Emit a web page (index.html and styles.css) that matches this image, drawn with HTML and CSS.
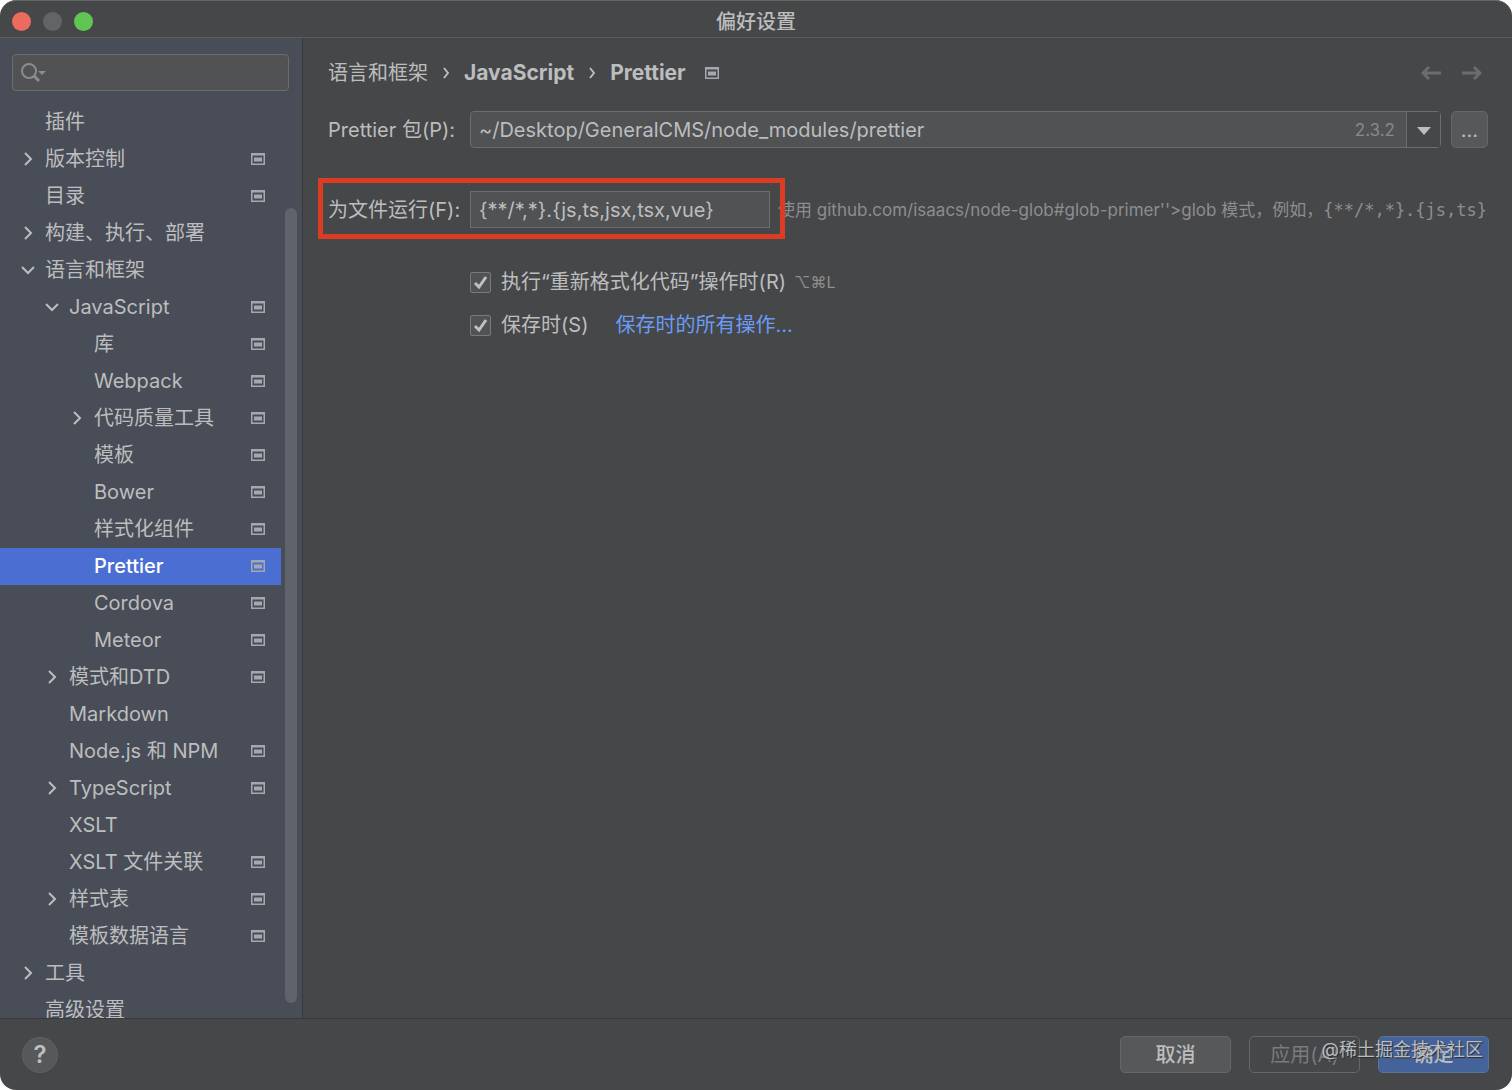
FILE: index.html
```
<!DOCTYPE html>
<html lang="zh-CN">

<head>
    <meta charset="UTF-8">
    <meta name="viewport" content="width=device-width, initial-scale=1">
    <title>偏好设置</title>
    <link rel="stylesheet" href="styles.css">
</head>

<body>

    <!-- Shared icons -->
    <svg class="icon-defs" aria-hidden="true">
        <symbol id="icon-right" viewBox="0 0 16 16">
            <path d="M5 2l6 6-6 6" fill="none" stroke="currentColor" stroke-width="2" />
        </symbol>
        <symbol id="icon-down" viewBox="0 0 16 16">
            <path d="M2 5l6 6 6-6" fill="none" stroke="currentColor" stroke-width="2" />
        </symbol>
        <symbol id="icon-project" viewBox="0 0 14 12">
            <path d="M0 0h14v12H0zM1.5 2.5v8h11v-8z" fill="currentColor" fill-rule="evenodd" />
            <path d="M3 4.500h8v4H3z" fill="currentColor" />
        </symbol>
    </svg>

    <div class="window">
        <header class="title-bar">
            <div class="traffic-lights">
                <button class="light close" aria-label="关闭"></button>
                <button class="light minimize" aria-label="最小化"></button>
                <button class="light zoom" aria-label="缩放"></button>
            </div>
            <h1>偏好设置</h1>
        </header>

        <div class="content">
            <!-- Left side: settings tree -->
            <aside class="sidebar">
                <label class="search">
                    <svg class="search-icon" viewBox="0 0 26 20" aria-hidden="true">
                        <circle cx="8" cy="8" r="7" fill="none" stroke="currentColor" stroke-width="2" />
                        <path d="M13 13l5 5" stroke="currentColor" stroke-width="3" />
                        <path d="M17 8h8l-4 4z" fill="currentColor" />
                    </svg>
                    <input type="text" aria-label="搜索">
                </label>

                <div class="tree-area">
                    <nav class="tree">
                        <a href="#" class="row"><i class="arrow"></i><span>插件</span></a>
                        <a href="#" class="row"><svg class="arrow"><use href="#icon-right" /></svg><span>版本控制</span><svg class="project"><use href="#icon-project" /></svg></a>
                        <a href="#" class="row"><i class="arrow"></i><span>目录</span><svg class="project"><use href="#icon-project" /></svg></a>
                        <a href="#" class="row"><svg class="arrow"><use href="#icon-right" /></svg><span>构建、执行、部署</span></a>
                        <a href="#" class="row"><svg class="arrow"><use href="#icon-down" /></svg><span>语言和框架</span></a>
                        <a href="#" class="row level-1"><svg class="arrow"><use href="#icon-down" /></svg><span>JavaScript</span><svg class="project"><use href="#icon-project" /></svg></a>
                        <a href="#" class="row level-2"><i class="arrow"></i><span>库</span><svg class="project"><use href="#icon-project" /></svg></a>
                        <a href="#" class="row level-2"><i class="arrow"></i><span>Webpack</span><svg class="project"><use href="#icon-project" /></svg></a>
                        <a href="#" class="row level-2"><svg class="arrow"><use href="#icon-right" /></svg><span>代码质量工具</span><svg class="project"><use href="#icon-project" /></svg></a>
                        <a href="#" class="row level-2"><i class="arrow"></i><span>模板</span><svg class="project"><use href="#icon-project" /></svg></a>
                        <a href="#" class="row level-2"><i class="arrow"></i><span>Bower</span><svg class="project"><use href="#icon-project" /></svg></a>
                        <a href="#" class="row level-2"><i class="arrow"></i><span>样式化组件</span><svg class="project"><use href="#icon-project" /></svg></a>
                        <a href="#" class="row level-2 selected"><i class="arrow"></i><span>Prettier</span><svg class="project"><use href="#icon-project" /></svg></a>
                        <a href="#" class="row level-2"><i class="arrow"></i><span>Cordova</span><svg class="project"><use href="#icon-project" /></svg></a>
                        <a href="#" class="row level-2"><i class="arrow"></i><span>Meteor</span><svg class="project"><use href="#icon-project" /></svg></a>
                        <a href="#" class="row level-1"><svg class="arrow"><use href="#icon-right" /></svg><span>模式和DTD</span><svg class="project"><use href="#icon-project" /></svg></a>
                        <a href="#" class="row level-1"><i class="arrow"></i><span>Markdown</span></a>
                        <a href="#" class="row level-1"><i class="arrow"></i><span>Node.js 和 NPM</span><svg class="project"><use href="#icon-project" /></svg></a>
                        <a href="#" class="row level-1"><svg class="arrow"><use href="#icon-right" /></svg><span>TypeScript</span><svg class="project"><use href="#icon-project" /></svg></a>
                        <a href="#" class="row level-1"><i class="arrow"></i><span>XSLT</span></a>
                        <a href="#" class="row level-1"><i class="arrow"></i><span>XSLT 文件关联</span><svg class="project"><use href="#icon-project" /></svg></a>
                        <a href="#" class="row level-1"><svg class="arrow"><use href="#icon-right" /></svg><span>样式表</span><svg class="project"><use href="#icon-project" /></svg></a>
                        <a href="#" class="row level-1"><i class="arrow"></i><span>模板数据语言</span><svg class="project"><use href="#icon-project" /></svg></a>
                        <a href="#" class="row"><svg class="arrow"><use href="#icon-right" /></svg><span>工具</span></a>
                        <a href="#" class="row"><i class="arrow"></i><span>高级设置</span></a>
                    </nav>
                    <div class="scroll-thumb"></div>
                </div>
            </aside>

            <!-- Right side: Prettier settings -->
            <main class="settings">
                <div class="top-line">
                    <div class="breadcrumb">
                        <span>语言和框架</span>
                        <svg class="separator" viewBox="0 0 6 12"><path d="M1 1l4 5-4 5" fill="none" stroke="currentColor" stroke-width="2" /></svg>
                        <b>JavaScript</b>
                        <svg class="separator" viewBox="0 0 6 12"><path d="M1 1l4 5-4 5" fill="none" stroke="currentColor" stroke-width="2" /></svg>
                        <b>Prettier</b>
                        <svg class="project"><use href="#icon-project" /></svg>
                    </div>
                    <div class="history">
                        <button aria-label="后退" disabled>
                            <svg viewBox="0 0 20 16"><path d="M20 8H2M8 2L2 8l6 6" fill="none" stroke="currentColor" stroke-width="3" /></svg>
                        </button>
                        <button aria-label="前进" disabled>
                            <svg viewBox="0 0 20 16"><path d="M0 8h18M12 2l6 6-6 6" fill="none" stroke="currentColor" stroke-width="3" /></svg>
                        </button>
                    </div>
                </div>

                <div class="form-row">
                    <label for="package">Prettier 包(P):</label>
                    <div class="combo">
                        <input type="text" id="package" value="~/Desktop/GeneralCMS/node_modules/prettier">
                        <span class="version">2.3.2</span>
                        <button class="combo-button" aria-label="选择包">
                            <svg viewBox="0 0 14 8"><path d="M0 0h14L7 8z" fill="currentColor" /></svg>
                        </button>
                    </div>
                    <button class="browse">...</button>
                </div>

                <div class="form-row run-row">
                    <div class="highlight">
                        <label for="files">为文件运行(F):</label>
                        <input type="text" id="files" class="text-field" value="{**/*,*}.{js,ts,jsx,tsx,vue}">
                    </div>
                    <p class="hint">使用 github.com/isaacs/node-glob#glob-primer''&gt;glob 模式，例如，<code>{**/*,*}.{js,ts}</code></p>
                </div>

                <div class="options">
                    <div class="option">
                        <input type="checkbox" id="on-reformat" checked>
                        <label for="on-reformat">执行“重新格式化代码”操作时(R)</label>
                        <kbd>⌥⌘L</kbd>
                    </div>
                    <div class="option">
                        <input type="checkbox" id="on-save" checked>
                        <label for="on-save">保存时(S)</label>
                        <a href="#" class="save-link">保存时的所有操作...</a>
                    </div>
                </div>
            </main>
        </div>

        <footer class="footer">
            <button class="help" aria-label="帮助">?</button>
            <div class="actions">
                <button class="action">取消</button>
                <button class="action" disabled>应用(A)</button>
                <button class="action primary">确定</button>
            </div>
            <span class="watermark">@稀土掘金技术社区</span>
        </footer>
    </div>

</body>

</html>
```
FILE: styles.css
```
/* Preferences window */
* {
    box-sizing: border-box;
}

body {
    margin: 0;
    background-color: #fff;
    color: #bcbdbf;
    font-family: Inter, "Noto Sans CJK SC", sans-serif;
    font-size: 20px;
    line-height: 24px;
}

button,
input {
    font: inherit;
    color: inherit;
}

button {
    padding: 0;
}

.icon-defs {
    display: none;
}

.window {
    display: flex;
    flex-direction: column;
    height: 100vh;
    border-top: 1px solid #636466;
    border-radius: 16px;
    background-color: #464749;
    overflow: hidden;
}

/* Title bar */
.title-bar {
    display: grid;
    grid-template-columns: 1fr auto 1fr;
    align-items: center;
    height: 37px;
    border-bottom: 1px solid #5b5c5e;
    flex-shrink: 0;
}

.traffic-lights {
    display: flex;
    gap: 12px;
    padding: 4px 0 0 12px;
}

.light {
    width: 19px;
    height: 19px;
    border: none;
    border-radius: 50%;
}

.close {
    background-color: #ec6a5e;
}

.minimize {
    background-color: #636466;
}

.zoom {
    background-color: #61c554;
}

h1 {
    margin: 5px 0 0;
    font-size: 20px;
    font-weight: 500;
}

.content {
    display: flex;
    flex: 1;
    min-height: 0;
}

/* Left side */
.sidebar {
    display: flex;
    flex-direction: column;
    flex: 0 0 303px;
    min-width: 0;
    border-right: 1px solid #38393c;
    background-color: #494d57;
}

.search {
    display: flex;
    align-items: center;
    height: 37px;
    margin: 16px 13px 13px 12px;
    padding: 0 8px;
    border: 1px solid #6b6d6f;
    border-radius: 4px;
    background-color: #505254;
    color: #8a8c8e;
}

.search-icon {
    width: 26px;
    height: 20px;
    flex-shrink: 0;
}

.search input {
    flex: 1;
    min-width: 0;
    border: none;
    outline: none;
    background: none;
}

.tree-area {
    display: flex;
    flex: 1;
    min-height: 0;
}

.tree {
    flex: 1;
    overflow: hidden;
}

.row {
    display: flex;
    align-items: center;
    gap: 9px;
    height: 37px;
    padding: 0 16px 2px 20px;
    color: inherit;
    text-decoration: none;
}

.row span {
    flex: 1;
    white-space: nowrap;
}

.level-1 {
    padding-left: 44px;
}

.level-2 {
    padding-left: 69px;
}

.selected {
    background-color: #4b6ed2;
}

.selected span {
    color: #fff;
    font-weight: 500;
}

.arrow {
    width: 16px;
    height: 16px;
}

.project {
    width: 14px;
    height: 12px;
    color: #a4a9af;
}

.scroll-thumb {
    width: 12px;
    margin: 104px 5px 15px 4px;
    border-radius: 6px;
    background-color: #5f636a;
}

/* Right side */
.settings {
    flex: 1;
    min-width: 0;
    padding: 23px 24px 0 25px;
}

.top-line,
.breadcrumb,
.history {
    display: flex;
    align-items: center;
}

.top-line {
    justify-content: space-between;
    margin-bottom: 26px;
}

.breadcrumb {
    gap: 15px;
}

.breadcrumb b {
    font-size: 21px;
}

.breadcrumb .project {
    margin-left: 4px;
}

.separator {
    width: 6px;
    height: 12px;
}

.history {
    gap: 21px;
    padding-right: 6px;
}

.history button {
    display: flex;
    border: none;
    background: none;
    color: #6b6c6e;
}

.history svg {
    width: 20px;
    height: 16px;
}

.form-row {
    display: flex;
    align-items: center;
}

.form-row label {
    flex: 0 0 142px;
}

.combo {
    display: flex;
    align-items: center;
    flex: 1;
    height: 37px;
    border: 1px solid #6b6d6f;
    border-radius: 4px;
    background-color: #505254;
}

.combo input {
    flex: 1;
    min-width: 0;
    padding: 0 8px;
    border: none;
    outline: none;
    background: none;
}

.version {
    padding-right: 11px;
    color: #87898b;
    font-size: 17px;
}

.combo-button {
    width: 34px;
    height: 100%;
    border: none;
    border-left: 1px solid #6b6d6f;
    background-color: #464749;
}

.combo-button svg {
    width: 14px;
    height: 8px;
    vertical-align: middle;
}

.browse {
    width: 37px;
    height: 37px;
    margin-left: 10px;
    border: 1px solid #656769;
    border-radius: 5px;
    background-color: #56585a;
}

.run-row {
    margin-top: 43px;
}

.highlight {
    position: relative;
    display: flex;
    align-items: center;
}

/* Red frame drawn over the field */
.highlight::after {
    content: "";
    position: absolute;
    inset: -13px -15px -11px -10px;
    border: 5px solid #dd3c24;
    pointer-events: none;
}

.text-field {
    width: 300px;
    height: 37px;
    padding: 0 8px;
    border: 1px solid #6b6d6f;
    outline: none;
    background-color: #505254;
}

.hint {
    margin: 0 0 0 8px;
    color: #8c8e8f;
    font-size: 17px;
    white-space: nowrap;
}

.hint code {
    font-family: "DejaVu Sans Mono", monospace;
    font-size: 17px;
}

.options {
    display: flex;
    flex-direction: column;
    gap: 19px;
    padding: 42px 0 0 142px;
}

.option {
    display: flex;
    align-items: center;
}

.option input {
    appearance: none;
    width: 21px;
    height: 21px;
    margin: 0 10px 0 0;
    border: 1px solid #77797b;
    border-radius: 2px;
    background: #505254 url("data:image/svg+xml,%3Csvg xmlns='http://www.w3.org/2000/svg' viewBox='0 0 19 19'%3E%3Cpath d='M4 10l4 4 7-10' fill='none' stroke='%23c0c1c2' stroke-width='3'/%3E%3C/svg%3E") center / 19px 19px no-repeat;
}

.option kbd {
    margin-left: 8px;
    color: #8c8e8f;
    font-family: Inter, "DejaVu Sans", sans-serif;
    font-size: 16px;
}

.save-link {
    margin-left: 27px;
    color: #6a9cf5;
    text-decoration: none;
}

/* Footer */
.footer {
    position: relative;
    display: flex;
    align-items: center;
    justify-content: space-between;
    height: 72px;
    padding: 0 23px 0 22px;
    border-top: 1px solid #38393c;
    flex-shrink: 0;
}

.help {
    width: 36px;
    height: 36px;
    border: 1px solid #606264;
    border-radius: 50%;
    background-color: #56585a;
    font-size: 24px;
    font-weight: 600;
}

.actions {
    display: flex;
    gap: 18px;
}

.action {
    width: 111px;
    height: 37px;
    border: 1px solid #656769;
    border-radius: 5px;
    background-color: #56585a;
    font-weight: 500;
}

.action:disabled {
    background: none;
    color: #7a7b7d;
    font-weight: 400;
}

.primary {
    border-color: #5c7395;
    background-color: #44639a;
}

.watermark {
    position: absolute;
    right: 29px;
    bottom: 28px;
    color: #b9bdc2;
    font-size: 18px;
    text-shadow: 1px 1px 1px #2a2b2c;
    pointer-events: none;
}
```
